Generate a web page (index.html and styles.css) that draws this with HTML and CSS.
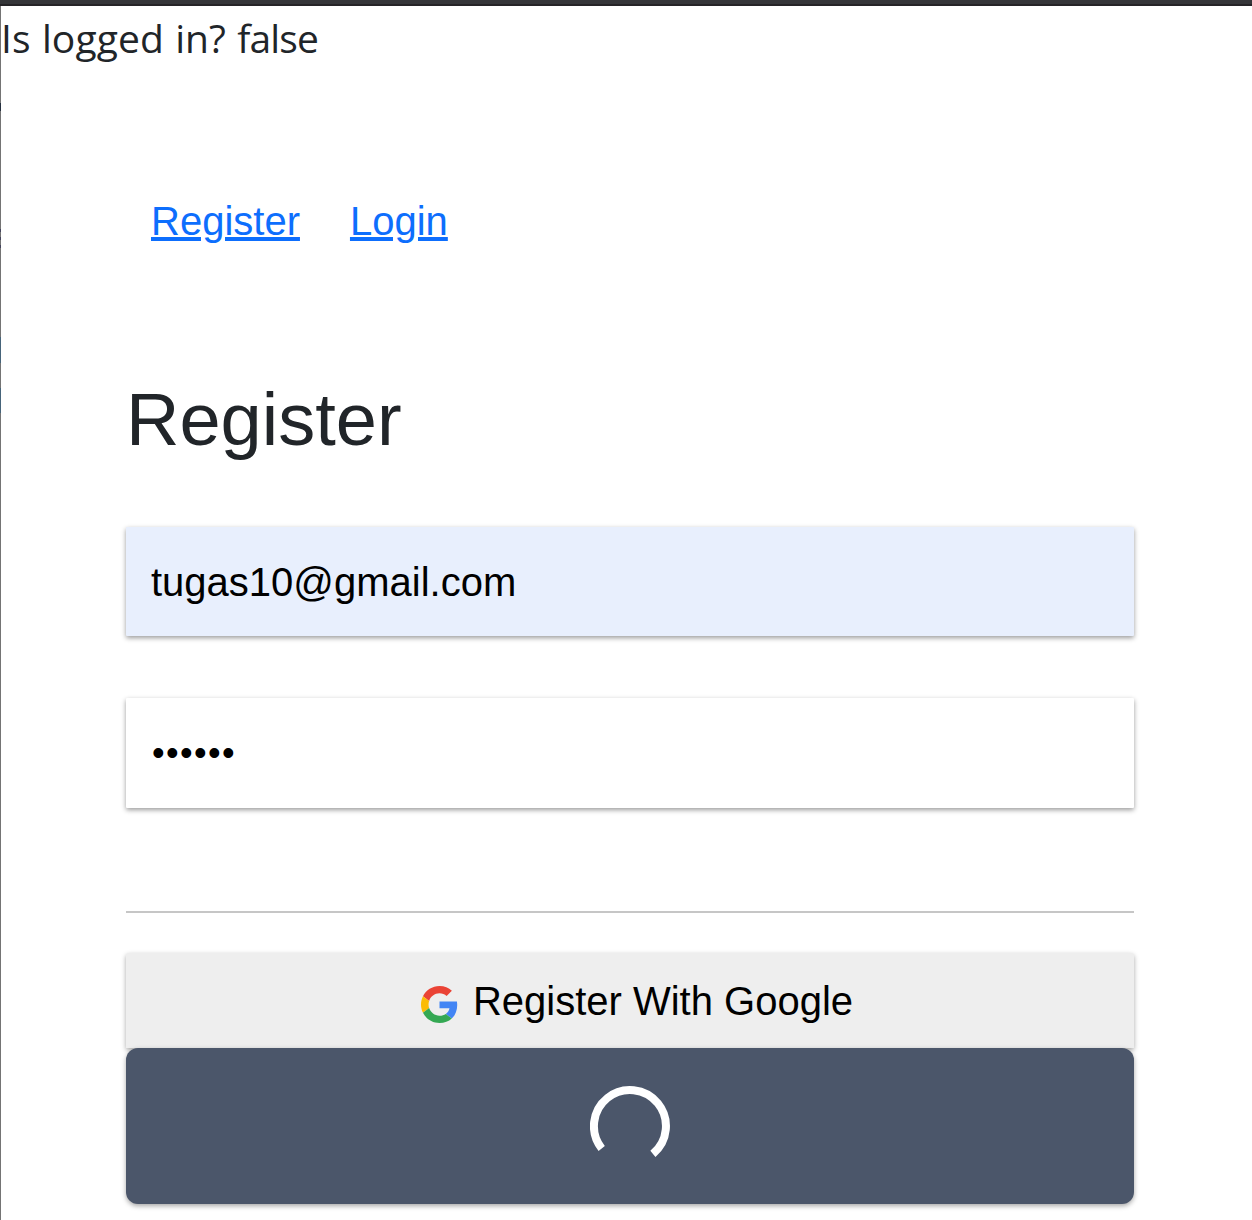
FILE: index.html
```html
<!DOCTYPE html>
<html lang="en">
<head>
<meta charset="utf-8">
<title>Register</title>
<link rel="stylesheet" href="styles.css">
</head>
<body>
<div class="topbar"></div>
<div class="page">
  <div class="status">Is logged in? <span class="status-value">false</span></div>
  <main class="content">
    <nav class="nav">
      <a href="#">Register</a>
      <a href="#">Login</a>
    </nav>
    <h1 class="title">Register</h1>
    <form class="form">
      <div class="field field-filled">tugas10@gmail.com</div>
      <div class="field field-password">••••••</div>
      <div class="divider"></div>
      <button class="google" type="button">
        <svg class="google-logo" viewBox="0 0 48 48">
          <path fill="#EA4335" d="M24 9.5c3.54 0 6.71 1.22 9.21 3.6l6.85-6.85C35.9 2.38 30.47 0 24 0 14.62 0 6.51 5.38 2.56 13.22l7.98 6.19C12.43 13.72 17.74 9.5 24 9.5z"/>
          <path fill="#4285F4" d="M46.98 24.55c0-1.57-.15-3.09-.38-4.55H24v9.02h12.94c-.58 2.96-2.26 5.48-4.78 7.18l7.73 6c4.51-4.18 7.09-10.36 7.09-17.65z"/>
          <path fill="#FBBC05" d="M10.53 28.59c-.48-1.45-.76-2.99-.76-4.59s.27-3.14.76-4.59l-7.98-6.19C.92 16.46 0 20.12 0 24c0 3.88.92 7.54 2.56 10.78l7.97-6.19z"/>
          <path fill="#34A853" d="M24 48c6.48 0 11.93-2.13 15.89-5.81l-7.73-6c-2.15 1.45-4.92 2.3-8.16 2.3-6.26 0-11.57-4.22-13.47-9.91l-7.98 6.19C6.51 42.62 14.62 48 24 48z"/>
        </svg>
        <span>Register With Google</span>
      </button>
      <button class="submit" type="button" aria-label="Loading">
        <svg class="spinner" viewBox="0 0 80 80">
          <path d="M11.7 62.4A36 36 0 1 1 62.9 67.8" fill="none" stroke="#fff" stroke-width="8"/>
        </svg>
      </button>
    </form>
  </main>
</div>
</body>
</html>
```
FILE: styles.css
```css
* { box-sizing: border-box; }

body {
  margin: 0;
  height: 1220px;
  overflow: hidden;
  display: flex;
  flex-direction: column;
  background: #fff;
  color: #212529;
  font-family: "Liberation Sans", Arial, sans-serif;
  font-size: 40px;
}

.topbar {
  flex: none;
  height: 6px;
  background: #353639;
  border-bottom: 2px solid #252427;
}

.page {
  flex: 1;
  padding-left: 1px;
  background: linear-gradient(
    #747474 97px, #26303f 97px 105px,
    #747474 105px 223px, #44445c 223px 226px,
    #747474 226px 231px, #44445c 231px 234px,
    #747474 234px 239px, #44445c 239px 242px,
    #747474 242px 331px, #46647a 331px 357px,
    #747474 357px 382px, #46647a 382px 407px,
    #747474 407px
  ) left top / 1px 100% no-repeat;
}

.status {
  height: 60px;
  padding-top: 2px;
  font-family: "Open Sans", "Noto Sans", sans-serif;
  font-size: 39px;
  line-height: 60px;
  white-space: nowrap;
  word-spacing: 1px;
  letter-spacing: 0.1px;
}

.status-value {
  letter-spacing: -0.9px;
}

.content {
  width: 1008px;
  margin-left: 125px;
}

.nav {
  display: flex;
  gap: 50px;
  padding: 125px 25px 0;
  line-height: 60px;
}

.nav a {
  color: #0d6efd;
  text-decoration: underline;
  text-decoration-thickness: 4px;
  text-underline-offset: 2px;
}

.title {
  margin: 125px 0 0;
  height: 151px;
  font-size: 74px;
  font-weight: 400;
  line-height: 88px;
}

.form {
  display: flex;
  flex-direction: column;
}

.field {
  height: 109px;
  padding: 0 25px;
  color: #000;
  line-height: 110px;
  border-radius: 1px;
  box-shadow: 0 2px 5px rgba(0, 0, 0, 0.4);
}

.field-filled {
  background: #e8effd;
}

.field-password {
  height: 110px;
  margin-top: 62px;
  padding-left: 26px;
  background: #fff;
  font-size: 36px;
  letter-spacing: 1.4px;
}

.divider {
  height: 2px;
  margin: 103px 0 40px;
  background: #c6c6c6;
}

button {
  display: flex;
  align-items: center;
  justify-content: center;
  padding: 0;
  border: 0;
  font: inherit;
  color: #000;
  box-shadow: 0 2px 5px rgba(0, 0, 0, 0.35);
}

.google {
  height: 95px;
  gap: 15px;
  padding: 2px 0 0 14px;
  background: #eee;
  border-radius: 3px 3px 0 0;
}

.google-logo {
  width: 37px;
  height: 37px;
  margin-top: 5px;
}

.submit {
  height: 156px;
  background: #4b566a;
  border-radius: 12px;
}

.spinner {
  width: 80px;
  height: 80px;
}
```
